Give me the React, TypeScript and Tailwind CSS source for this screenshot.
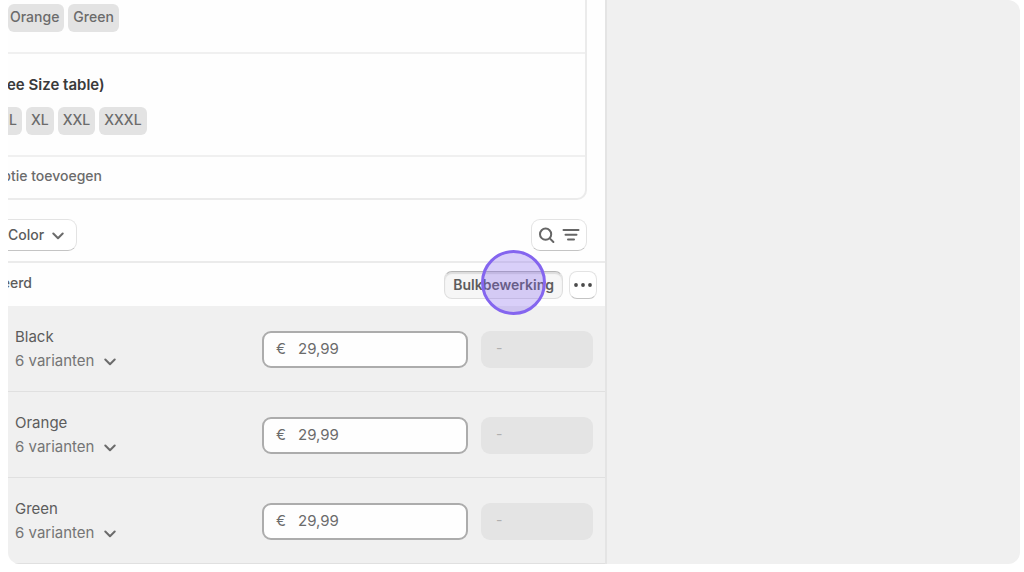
import { useState } from "react";

const variants = [
    { name: "Black", count: 6, price: "29,99" },
    { name: "Orange", count: 6, price: "29,99" },
    { name: "Green", count: 6, price: "29,99" },
];

function Chevron() {
    return (
        <svg viewBox="0 0 12 8" className="w-3 h-2 shrink-0 translate-y-px" fill="none" stroke="#6b6b6b" strokeWidth="2" strokeLinecap="round" strokeLinejoin="round">
            <path d="M1.3 1.5 6 6.2l4.7-4.7" />
        </svg>
    );
}

function Chip({ label }: { label: string }) {
    return <span className="h-7 px-[5px] rounded-md bg-[#e3e3e3] leading-[26px]">{label}</span>;
}

function OptionsCard() {
    return (
        <section className="mr-[18px] h-[200px] border-r-2 border-b-2 border-[#ebebeb] rounded-br-[10px] text-sm font-medium text-[#6b6b6b]">
            <div className="h-[54px] pt-1 flex gap-1 border-b-2 border-[#f0f0f0]">
                <span className="h-7 pl-[2px] pr-[5px] rounded-md bg-[#e3e3e3] leading-[26px]">Orange</span>
                <Chip label="Green" />
            </div>
            <div className="h-[103px] pt-[21px] border-b-2 border-[#f0f0f0]">
                <h2 className="-ml-px text-[15px] leading-5 font-semibold text-[#3a3a3a]">ee Size table)</h2>
                <div className="mt-3 flex gap-1">
                    <span className="h-7 pl-px pr-[5px] rounded-r-md bg-[#e3e3e3] leading-[26px]">L</span>
                    <Chip label="XL" />
                    <Chip label="XXL" />
                    <Chip label="XXXL" />
                </div>
            </div>
            <button className="mt-[9px] w-[94px] flex justify-end overflow-hidden whitespace-nowrap leading-5">ptie toevoegen</button>
        </section>
    );
}

export default function App() {
    const [prices, setPrices] = useState(variants.map((v) => v.price));

    return (
        <div className="bg-white pl-2 pr-1 pb-2 font-[Inter,sans-serif]">
            <main className="grid grid-cols-[599fr_413fr] rounded-xl rounded-tl-none overflow-hidden bg-[#f0f0f0]">
                <div className="bg-[#fefefe] border-r-2 border-[#e4e4e4]">
                    <OptionsCard />

                    {/* Group by and filters */}
                    <div className="h-[63px] pt-[19px] pr-[18px] flex items-start justify-between border-b-2 border-[#ebebeb]">
                        <button className="h-8 pr-3 flex items-center gap-2 bg-white border border-l-0 border-[#e3e3e3] border-b-[#c4c4c4] rounded-r-[9px] text-sm leading-5 font-medium text-[#5c5c5c]">
                            Color
                            <Chevron />
                        </button>
                        <button aria-label="Zoeken en filteren" className="h-8 w-14 flex items-center justify-center gap-[7px] bg-white border border-[#e3e3e3] border-b-[#c4c4c4] rounded-[9px]">
                            <svg viewBox="0 0 17 17" className="size-[17px]" fill="none" stroke="#666" strokeWidth="2" strokeLinecap="round">
                                <circle cx="7.6" cy="7.2" r="5.6" />
                                <path d="m12 11.6 3.4 3.4" />
                            </svg>
                            <svg viewBox="0 0 18 14" className="w-[18px] h-3.5" fill="none" stroke="#666" strokeWidth="2" strokeLinecap="round">
                                <path d="M1.5 2h15M3.5 6.7h11M6 11.5h6" />
                            </svg>
                        </button>
                    </div>

                    {/* Selection bar */}
                    <div className="h-[43px] pr-2 flex items-center gap-[6px]">
                        <span className="h-6 w-6 flex justify-end overflow-hidden text-sm leading-5 font-medium text-[#5c5c5c]">eerd</span>
                        <div className="relative ml-auto">
                            <button className="h-7 px-2 rounded-lg border border-[#dedede] border-t-[#b5b5b5] bg-[#f6f6f6] text-sm leading-5 font-semibold text-[#5c5c5c] shadow-[inset_0_2px_1px_#ddd]">
                                Bulkbewerking
                            </button>
                            <span className="absolute left-[37px] -top-[21px] size-[65px] rounded-full border-3 border-[#8465ef] bg-[#8465ef]/30" />
                        </div>
                        <button aria-label="Meer acties" className="size-7 flex items-center justify-center bg-white border border-[#e3e3e3] border-b-[#c4c4c4] rounded-lg">
                            <svg viewBox="0 0 18 4" className="w-[18px] h-1" fill="#4a4a4a">
                                <circle cx="2" cy="2" r="1.9" />
                                <circle cx="9" cy="2" r="1.9" />
                                <circle cx="16" cy="2" r="1.9" />
                            </svg>
                        </button>
                    </div>

                    <table className="w-full table-fixed border-separate border-spacing-0 bg-[#f0f0f0]">
                        <tbody>
                            {variants.map((v, i) => (
                                <tr key={v.name} className="h-[86px]">
                                    <td className="p-0 pl-[7px] pb-px border-y border-t-transparent border-[#e0e0e0] text-[15px] leading-6">
                                        <div className="text-[#5c5c5c]">{v.name}</div>
                                        <button className="flex items-center gap-[10px] text-[#757575]">
                                            {v.count} varianten
                                            <Chevron />
                                        </button>
                                    </td>
                                    <td className="p-0 w-[219px] border-y border-t-transparent border-[#e0e0e0]">
                                        <label className="h-[37px] mr-[13px] px-3 pb-px flex items-center gap-3 bg-[#fefefe] border-2 border-[#acacac] rounded-[9px] text-[15px] leading-5 text-[#6b6b6b]">
                                            €
                                            <input
                                                aria-label={`Prijs ${v.name}`}
                                                value={prices[i]}
                                                onChange={(e) => setPrices(prices.map((p, j) => (j === i ? e.target.value : p)))}
                                                className="w-full min-w-0 outline-none"
                                            />
                                        </label>
                                    </td>
                                    <td className="p-0 w-[124px] border-y border-t-transparent border-[#e0e0e0]">
                                        <input
                                            aria-label={`Voorraad ${v.name}`}
                                            value="-"
                                            disabled
                                            className="block h-[37px] w-28 px-[15px] pb-1 rounded-[9px] bg-[#e4e4e4] text-sm leading-5 text-[#b0b0b0]"
                                        />
                                    </td>
                                </tr>
                            ))}
                        </tbody>
                    </table>
                </div>
            </main>
        </div>
    );
}
